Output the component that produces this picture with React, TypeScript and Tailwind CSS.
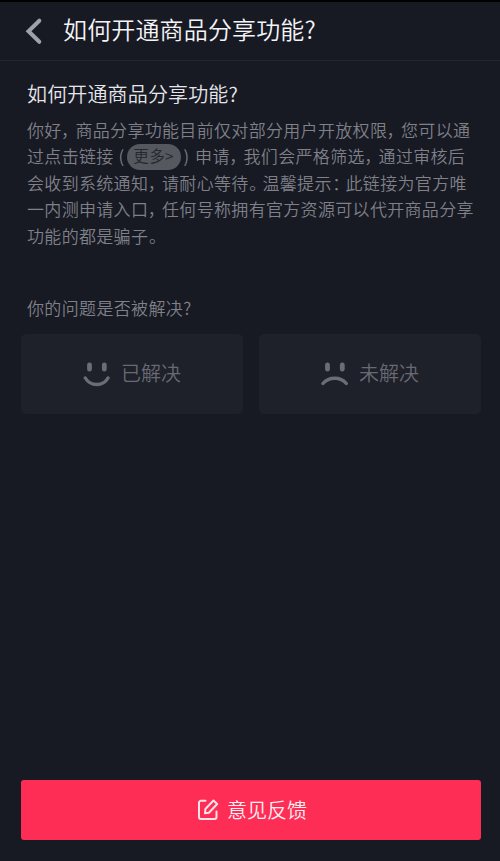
import type { ReactNode } from 'react';

// narrow full-width punctuation
function P({ children }: { children: ReactNode }) {
  return <span className="w-[13.8px] pl-[0.5px] tracking-normal [font-feature-settings:'palt']">{children}</span>;
}

function Line({ children }: { children: ReactNode }) {
  return <div className="flex h-[26.5px] items-center whitespace-nowrap">{children}</div>;
}

function Face({ sad }: { sad?: boolean }) {
  return (
    <svg width="28" height="28" viewBox="0 0 28 28" fill="none" stroke="#6b6c75" strokeLinecap="round">
      <path d="M6.500 4.800v4.400M21.300 4.800v4.400" strokeWidth="4.800" />
      {sad ? (
        <path d="M2 23.500C8 16.500 19.500 16.500 25.300 23.500" strokeWidth="3.400" />
      ) : (
        <path d="M2.300 18C7.500 26.700 20 26.700 25 18" strokeWidth="3.400" />
      )}
    </svg>
  );
}

export default function App() {
  return (
    <div className="flex h-[861px] w-[500px] flex-col overflow-hidden border-t-2 border-black bg-[#171923] font-['Noto_Sans_CJK_SC',sans-serif] font-[350]">
      <header className="flex h-[59px] items-center border-b border-[#22242e] pl-[24px]">
        <svg width="20" height="28" viewBox="0 0 20 28" fill="none" stroke="#a0a1a8" strokeWidth="4" strokeLinecap="round">
          <path d="M15.300 3.700L4.500 14.300l10.800 10.500" />
        </svg>
        <h1 className="mb-[4px] ml-[19px] text-[24px] leading-[34px] tracking-[0.15px] text-[#f4f4f6]">如何开通商品分享功能?</h1>
      </header>

      <main className="flex-1 pr-[19px] pl-[21px]">
        <h2 className="mt-[19px] pl-[6px] text-[20px] leading-[28px] tracking-[0.15px] text-[#e6e6ea]">如何开通商品分享功能?</h2>
        <div className="mt-[8px] pl-[6px] text-[17px] tracking-[0.32px] text-[#7f8088]">
          <Line>你好<P>，</P>商品分享功能目前仅对部分用户开放权限<P>，</P>您可以通</Line>
          <Line>
            过点击链接
            <span className="w-[13px] pl-[5px]">(</span>
            <span className="mt-[2px] flex h-[26px] w-[54px] items-center justify-center rounded-full bg-[#56585f] pb-[2px] text-[15.5px] text-[#25272f]">更多&gt;</span>
            <span className="w-[14.5px] pl-[3px]">)</span>
            申请<P>，</P>我们会严格筛选<P>，</P>通过审核后
          </Line>
          <Line>会收到系统通知<P>，</P>请耐心等待<P>。</P>温馨提示<P>：</P>此链接为官方唯</Line>
          <Line>一内测申请入口<P>，</P>任何号称拥有官方资源可以代开商品分享</Line>
          <Line>功能的都是骗子<P>。</P></Line>
        </div>

        <p className="mt-[46px] pl-[6px] text-[17px] leading-[26px] tracking-[0.35px] text-[#7f8088]">你的问题是否被解决?</p>
        <div className="mt-[13px] grid grid-cols-2 gap-4 text-[20px] text-[#686972]">
          <button className="flex h-20 items-center justify-center gap-[10px] rounded-[5px] bg-[#1e202a]">
            <Face />
            <span className="mb-[2px]">已解决</span>
          </button>
          <button className="flex h-20 items-center justify-center gap-[10px] rounded-[5px] bg-[#1e202a]">
            <Face sad />
            <span className="mb-[2px]">未解决</span>
          </button>
        </div>
      </main>

      <footer className="pr-[19px] pb-[21px] pl-[21px]">
        <button className="flex h-[60px] w-full items-center justify-center gap-[8px] rounded-[3px] bg-[#fe2d55] pl-[2px] text-[20px] text-[#ffeef1]">
          <svg width="22" height="22" viewBox="0 0 22 22" fill="none" stroke="#ffe3e8" strokeWidth="2" strokeLinecap="round" strokeLinejoin="round">
            <path d="M8.500 1.800H4a2 2 0 0 0-2 2V18a2 2 0 0 0 2 2h13.500a2 2 0 0 0 2-2v-5.500" />
            <path d="M8 14.300l.4-4.300L16.500 1.500l3.700 3.500-8.300 8.700z" />
          </svg>
          意见反馈
        </button>
      </footer>
    </div>
  );
}
